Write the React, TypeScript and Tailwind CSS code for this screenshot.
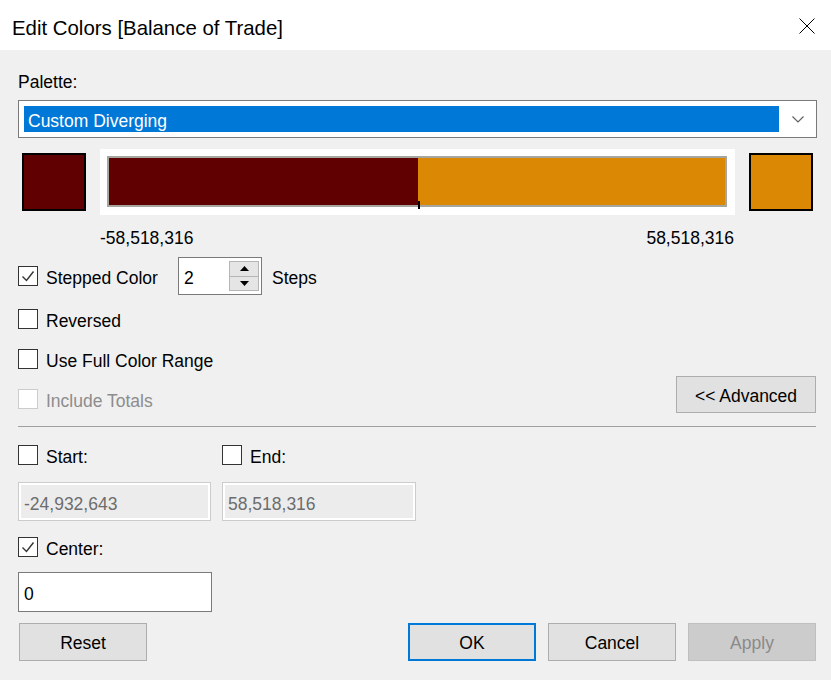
import React from "react";

const Check = ({ checked = false, disabled = false }: { checked?: boolean; disabled?: boolean }) => (
  <div
    className={`w-[20px] h-[20px] border ${disabled ? "border-[#cccccc]" : "border-[#333333]"} bg-white flex items-center justify-center shrink-0`}
  >
    {checked && (
      <svg width="18" height="18" viewBox="0 0 18 18">
        <polyline points="3.5,9.5 7.5,13.5 14.5,4.5" fill="none" stroke="#333333" strokeWidth="1.4" />
      </svg>
    )}
  </div>
);

const Btn = ({ label, cls }: { label: string; cls: string }) => (
  <div className={`h-[38px] w-[128px] flex items-center justify-center pt-[2px] ${cls}`}>{label}</div>
);

export default function App() {
  return (
    <div
      className="w-[831px] h-[680px] bg-[#f0f0f0] text-black flex flex-col overflow-hidden"
      style={{ fontFamily: '"Liberation Sans", Arial, sans-serif' }}
    >
      {/* Title bar */}
      <div className="h-[50px] bg-white flex items-center justify-between pl-[12px] pr-[16px] shrink-0">
        <div className="text-[20.4px] leading-[24px] pt-[6px]">Edit Colors [Balance of Trade]</div>
        <svg width="16" height="16" viewBox="0 0 16 16" className="mt-[2px]">
          <line x1="0.5" y1="0.5" x2="15.5" y2="15.5" stroke="#000" strokeWidth="1" />
          <line x1="15.5" y1="0.5" x2="0.5" y2="15.5" stroke="#000" strokeWidth="1" />
        </svg>
      </div>

      <div className="px-[18px] flex flex-col text-[17.5px] leading-[20px]">
        <div className="mt-[22px] h-[20px]">Palette:</div>

        {/* Dropdown */}
        <div className="mt-[8px] h-[38px] w-[799px] border border-[#7a7a7a] bg-white flex items-center pl-[5px] pr-[12px]">
          <div className="h-[26px] w-[755px] bg-[#0078d7] text-white flex items-center pl-[4px] pt-[3px]">Custom Diverging</div>
          <div className="flex-1 flex justify-end">
            <svg width="12" height="7" viewBox="0 0 12 7">
              <polyline points="0.5,0.5 6,6 11.5,0.5" fill="none" stroke="#606060" strokeWidth="1.2" />
            </svg>
          </div>
        </div>

        {/* Color row */}
        <div className="mt-[11px] h-[66px] flex items-center">
          <div className="ml-[4px] w-[64px] h-[58px] border-2 border-black bg-[#600000]" />
          <div className="ml-[14px] w-[635px] h-[66px] bg-white pt-[7px] pl-[7px] pr-[8px] pb-[8px]">
            <div className="relative h-full border-2 border-[#a6a6a0] flex">
              <div className="w-[309px] h-full bg-[#600000]" />
              <div className="flex-1 h-full bg-[#db8805]" />
              <div className="absolute left-[309px] top-[43px] w-[2px] h-[8px] bg-black" />
            </div>
          </div>
          <div className="ml-[14px] w-[64px] h-[58px] border-2 border-black bg-[#db8805]" />
        </div>

        {/* Labels */}
        <div className="mt-[13px] h-[20px] flex justify-between pl-[82px] w-[716px]">
          <span>-58,518,316</span>
          <span>58,518,316</span>
        </div>

        {/* Stepped color */}
        <div className="mt-[9px] h-[38px] flex items-center">
          <div className="w-[160px] flex items-center">
            <Check checked />
            <span className="ml-[8px] pt-[4px]">Stepped Color</span>
          </div>
          <div className="w-[84px] h-[38px] border border-[#7a7a7a] bg-white flex items-center justify-between pl-[5px] pr-[2px]">
            <span className="pt-[4px]">2</span>
            <div className="w-[30px] h-[30px] flex flex-col border border-[#b5b5b5]">
              <div className="flex-1 bg-[#e5e5e5] border-b border-[#b5b5b5] flex items-center justify-center">
                <svg width="9" height="5" viewBox="0 0 9 5"><polygon points="0,5 4.5,0 9,5" fill="#000" /></svg>
              </div>
              <div className="flex-1 bg-[#e5e5e5] flex items-center justify-center">
                <svg width="9" height="5" viewBox="0 0 9 5"><polygon points="0,0 4.5,5 9,0" fill="#000" /></svg>
              </div>
            </div>
          </div>
          <span className="ml-[10px] pt-[4px]">Steps</span>
        </div>

        <div className="mt-[14px] h-[20px] flex items-center">
          <Check />
          <span className="ml-[8px] pt-[4px]">Reversed</span>
        </div>
        <div className="mt-[20px] h-[20px] flex items-center">
          <Check />
          <span className="ml-[8px] pt-[4px]">Use Full Color Range</span>
        </div>

        <div className="mt-[7px] h-[37px] flex items-start justify-between w-[798px]">
          <div className="mt-[13px] h-[20px] flex items-center">
            <Check disabled />
            <span className="ml-[8px] pt-[4px] text-[#8d8d8d]">Include Totals</span>
          </div>
          <div className="w-[140px] h-[37px] bg-[#e1e1e1] border border-[#adadad] flex items-center justify-center pt-[2px]">
            &lt;&lt; Advanced
          </div>
        </div>

        <div className="mt-[13px] h-[1px] w-[798px] bg-[#a0a0a0]" />

        {/* Start / End */}
        <div className="mt-[18px] h-[20px] flex items-center">
          <div className="w-[204px] flex items-center">
            <Check />
            <span className="ml-[8px] pt-[4px]">Start:</span>
          </div>
          <Check />
          <span className="ml-[8px] pt-[4px]">End:</span>
        </div>

        <div className="mt-[17px] flex gap-[11px]">
          <div className="w-[193px] h-[39px] border border-[#cccccc] bg-white p-[2px]">
            <div className="h-full bg-[#ececec] flex items-center pl-[3px] pt-[4px] text-[#6d6d6d]">-24,932,643</div>
          </div>
          <div className="w-[194px] h-[39px] border border-[#cccccc] bg-white p-[2px]">
            <div className="h-full bg-[#ececec] flex items-center pl-[3px] pt-[4px] text-[#6d6d6d]">58,518,316</div>
          </div>
        </div>

        <div className="mt-[16px] h-[20px] flex items-center">
          <Check checked />
          <span className="ml-[8px] pt-[4px]">Center:</span>
        </div>

        <div className="mt-[15px] w-[194px] h-[40px] border border-[#7a7a7a] bg-white flex items-center pl-[5px] pt-[4px]">0</div>

        <div className="mt-[11px] flex w-[798px]">
          <Btn label="Reset" cls="ml-[1px] w-[127px] bg-[#e1e1e1] border border-[#adadad]" />
          <div className="flex-1" />
          <Btn label="OK" cls="bg-[#e1e1e1] border-2 border-[#0078d7]" />
          <Btn label="Cancel" cls="ml-[12px] bg-[#e1e1e1] border border-[#adadad]" />
          <Btn label="Apply" cls="ml-[12px] bg-[#cccccc] border border-[#bfbfbf] text-[#8a8a8a]" />
        </div>
      </div>
    </div>
  );
}
